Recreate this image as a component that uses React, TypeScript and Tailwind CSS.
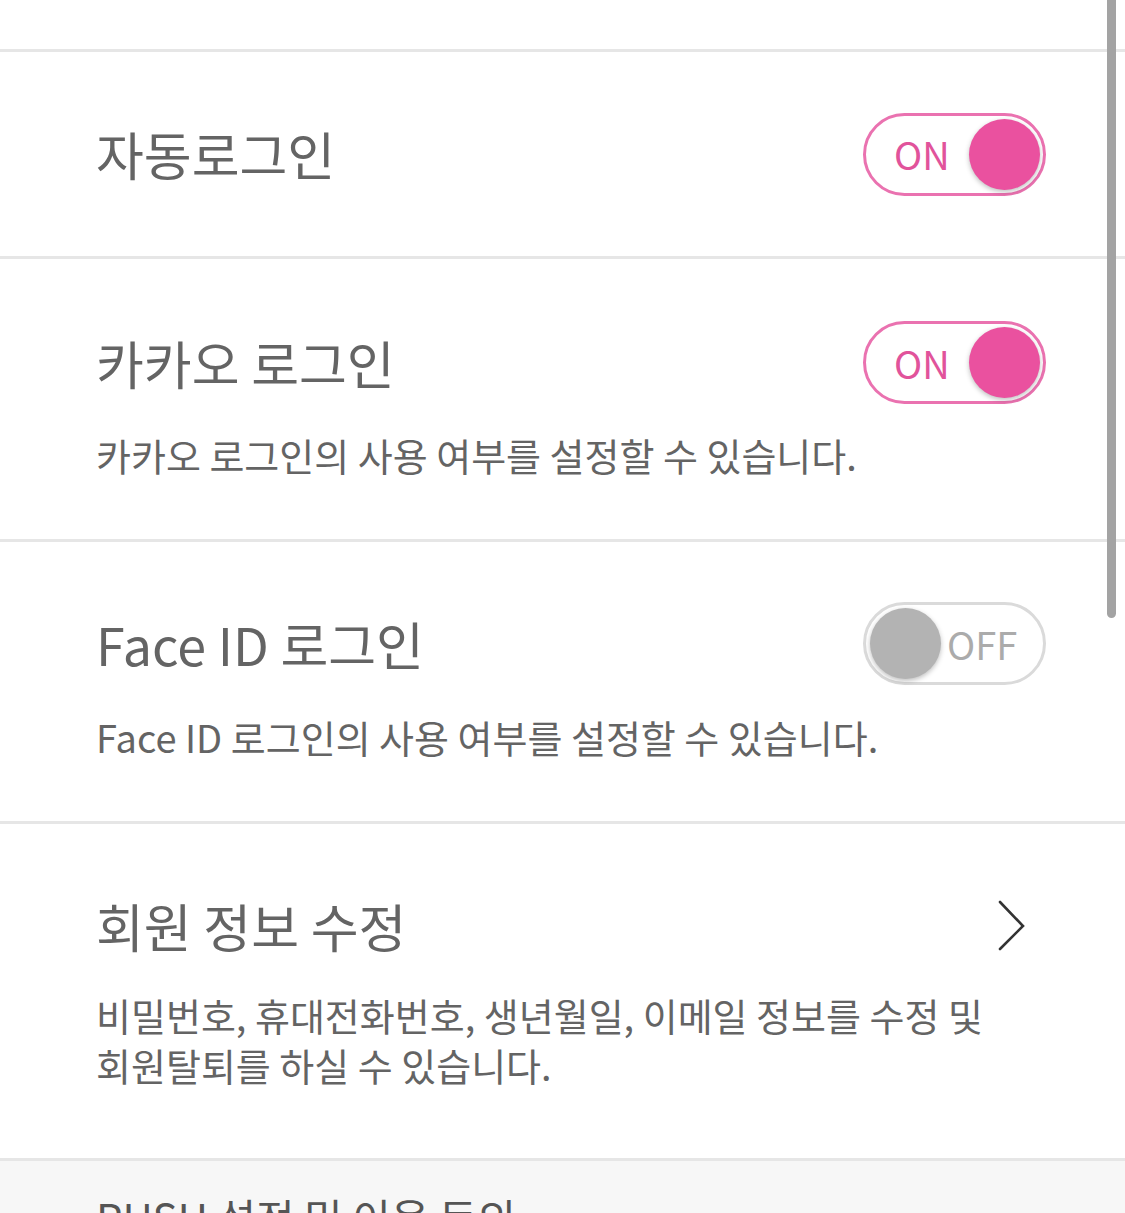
import React from "react"

const font = { fontFamily: '"Noto Sans CJK KR", "Noto Sans", sans-serif' }

function Toggle({ on }: { on: boolean }) {
  if (on) {
    return (
      <div className="flex h-[83px] w-[183px] shrink-0 items-center justify-between rounded-full border-[3px] border-[#ea72b0] bg-white pl-[28px] pr-[3px]">
        <span className="text-[38px] leading-none text-[#e1539b]">ON</span>
        <span className="h-[71px] w-[71px] rounded-full bg-[#ea519f] shadow-[0_2px_5px_rgba(0,0,0,0.25)]" />
      </div>
    )
  }
  return (
    <div className="flex h-[83px] w-[183px] shrink-0 items-center gap-[6px] rounded-full border-[3px] border-[#dadada] bg-white pl-[4px]">
      <span className="h-[71px] w-[71px] rounded-full bg-[#b3b3b3] shadow-[0_2px_5px_rgba(0,0,0,0.25)]" />
      <span className="text-[38px] leading-none text-[#ababab]">OFF</span>
    </div>
  )
}

function Chevron() {
  return (
    <svg width="40" height="60" viewBox="0 0 40 60" className="mr-[12px]">
      <path d="M6 6 L29 30 L6 53" fill="none" stroke="#333" strokeWidth="2.6" strokeLinecap="round" strokeLinejoin="miter" />
    </svg>
  )
}

export default function App() {
  return (
    <div style={font} className="relative h-[1213px] w-[1125px] overflow-hidden bg-white text-[#646464]">
      <div className="h-[52px] border-b-[3px] border-[#e6e6e6]" />

      <div className="flex h-[207px] items-center justify-between border-b-[3px] border-[#e6e6e6] pl-[96px] pr-[79px]">
        <span className="text-[52px] leading-[64px]">자동로그인</span>
        <Toggle on />
      </div>

      <div className="border-b-[3px] border-[#e6e6e6] pb-[59px] pl-[96px] pr-[79px] pt-[62px]">
        <div className="flex h-[83px] items-center justify-between">
          <span className="text-[52px] leading-[64px]">카카오 로그인</span>
          <Toggle on />
        </div>
        <p className="mt-[26px] text-[38px] leading-[50px]">카카오 로그인의 사용 여부를 설정할 수 있습니다.</p>
      </div>

      <div className="border-b-[3px] border-[#e6e6e6] pb-[59px] pl-[96px] pr-[79px] pt-[60px]">
        <div className="flex h-[83px] items-center justify-between">
          <span className="text-[52px] leading-[64px]">Face ID 로그인</span>
          <Toggle on={false} />
        </div>
        <p className="mt-[27px] text-[38px] leading-[50px]">Face ID 로그인의 사용 여부를 설정할 수 있습니다.</p>
      </div>

      <div className="border-b-[3px] border-[#e6e6e6] pb-[68px] pl-[96px] pr-[79px] pt-[60px]">
        <div className="flex h-[83px] items-center justify-between">
          <span className="text-[52px] leading-[64px]">회원 정보 수정</span>
          <Chevron />
        </div>
        <p className="mt-[23px] max-w-[920px] text-[38px] leading-[50px]">
          비밀번호, 휴대전화번호, 생년월일, 이메일 정보를 수정 및 회원탈퇴를 하실 수 있습니다.
        </p>
      </div>

      <div className="bg-[#f7f7f7] pl-[96px] pt-[28px]">
        <span className="whitespace-nowrap text-[42px] leading-[56px] text-[#555]">PUSH 설정 및 이용 동의</span>
      </div>

      <div className="absolute right-[9px] top-0 h-[618px] w-[9px] rounded-b-full bg-[#a3a3a3]" />
    </div>
  )
}
